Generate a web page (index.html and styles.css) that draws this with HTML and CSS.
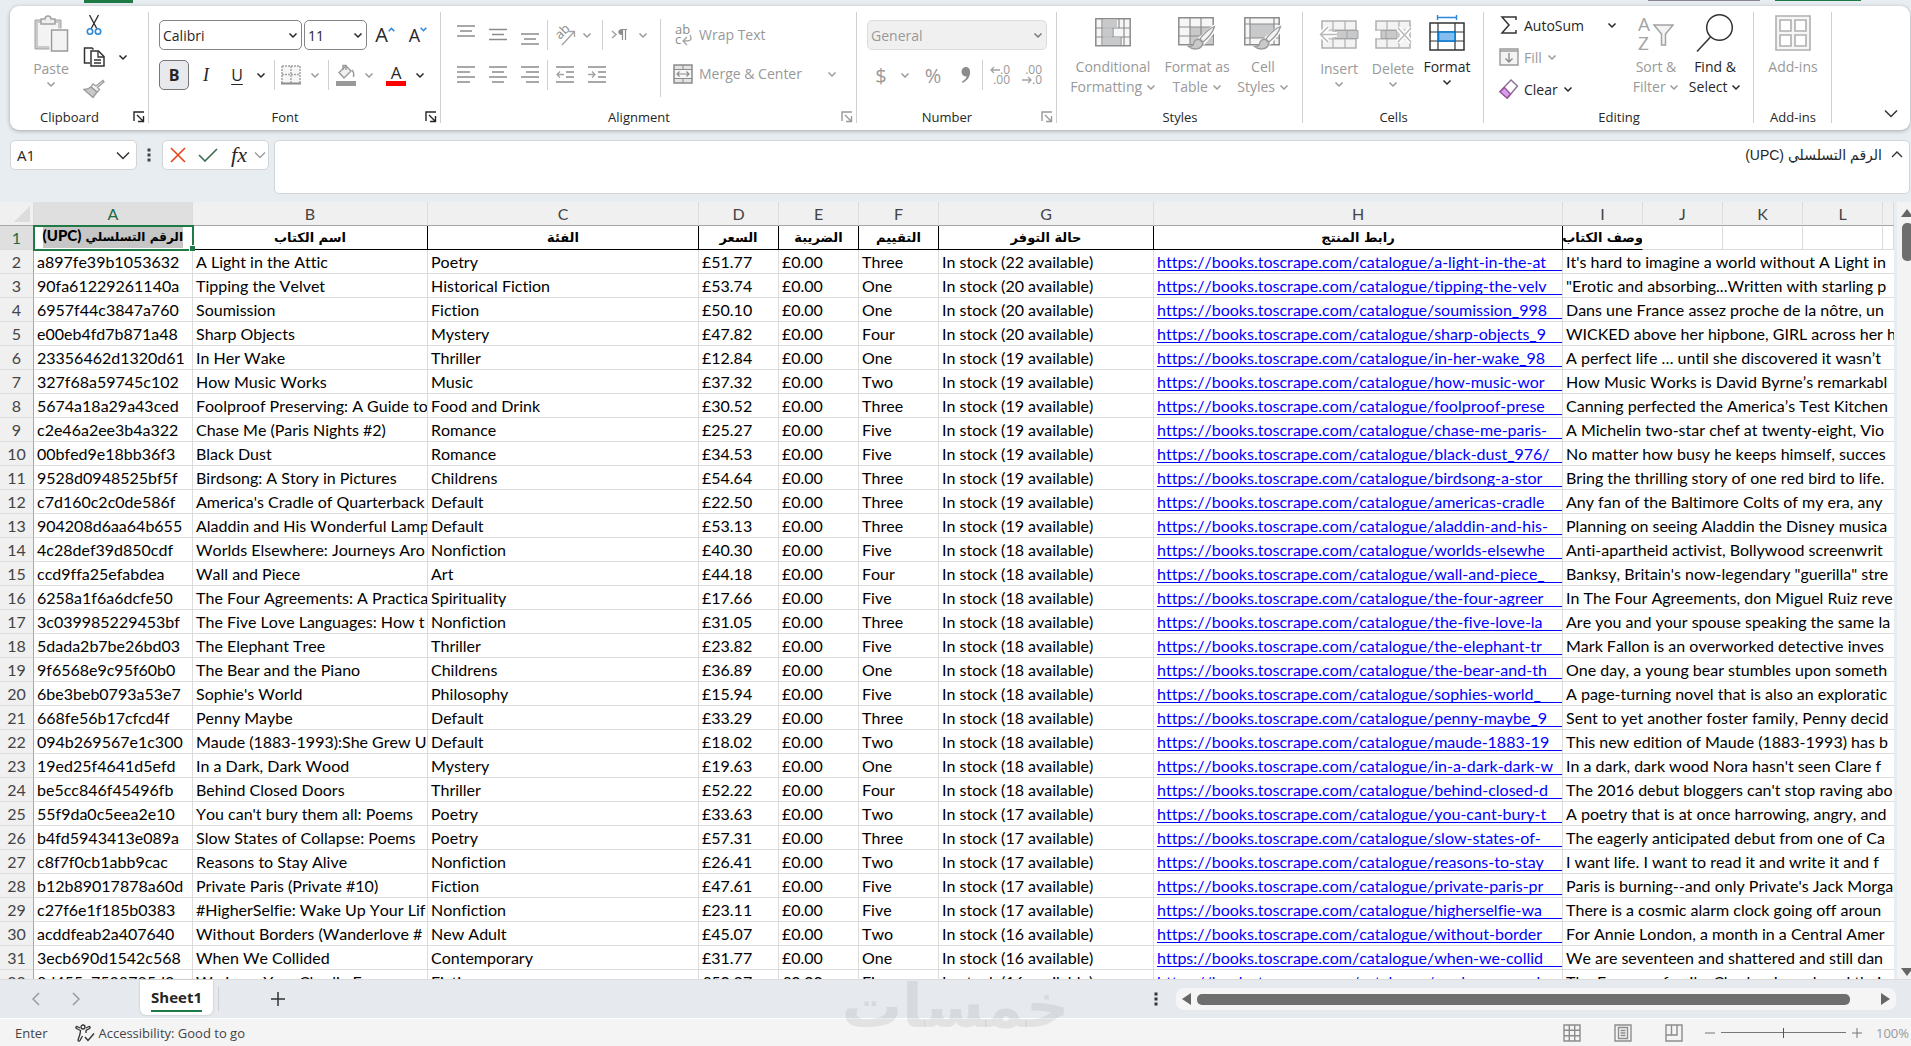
FILE: index.html
```html
<!DOCTYPE html>
<html lang="en">
<head>
  <meta charset="UTF-8">
  <meta name="viewport" content="width=device-width, initial-scale=1.0">
  <title>Books - Sheet1</title>
  <link rel="stylesheet" href="styles.css">
</head>
<body>

  <!-- shared icons -->
  <svg class="defs" aria-hidden="true">
    <symbol id="down" viewBox="0 0 10 10"><path d="M1.5 3.500 5 7l3.500-3.500" fill="none" stroke="currentColor" stroke-width="1.500"/></symbol>
    <symbol id="launch" viewBox="0 0 12 12"><path d="M1 10V1h10M4 4l6 6M10.500 5v5.500H5" fill="none" stroke="currentColor" stroke-width="1.400"/></symbol>
    <symbol id="brush" viewBox="0 0 30 26"><path d="M29 1 15 13l3 4L29 4z" fill="#fff" stroke="#fff" stroke-width="4"/><path d="M28.500 1.500C24 3 17 9 14 14l3 3c5-4 10-10 11.500-15.500z" fill="#f3f3f3" stroke="#9a9a9a" stroke-width="1.300"/><path d="M13.500 14.500c-4-.5-5.500 2-6 4.500-.5 2-3 2.500-5 2.500 4 3.500 13 4 14.500-3.500z" fill="#c8c9ca" stroke="#9a9a9a" stroke-width="1.300"/></symbol>
  </svg>

  <div class="titlebar">
    <span class="tab-mark"></span>
    <span class="comments-edge"></span>
    <span class="share-edge"></span>
  </div>

  <header class="ribbon">
    <section class="group clipboard">
      <div class="group-body">
        <button class="big low" disabled>
          <svg width="36" height="40" viewBox="0 0 36 40"><path d="M2 6h26v29H2z" fill="#c9cacb" stroke="#a3a3a3"/><path d="M5 9h20v23H5z" fill="#f3f3f3"/><path d="M8 10V5h4c0-4 6-4 6 0h4v5z" fill="#eee" stroke="#a3a3a3" stroke-width="1.500"/><path d="M18 16h17v21H18z" fill="#fafafa" stroke="#fff" stroke-width="3"/><path d="M18.500 16h16v21h-16z" fill="#f3f3f3" stroke="#9a9a9a" stroke-width="1.500"/></svg>
          <span>Paste</span>
          <svg class="chev"><use href="#down"/></svg>
        </button>
        <div class="small-tools">
          <button class="cut" aria-label="Cut"><svg width="16" height="22" viewBox="0 0 16 22"><path d="M3.500 1 11 15M12.500 1 5 15" fill="none" stroke="#333" stroke-width="1.400"/><circle cx="4" cy="17.500" r="2.700" fill="#fff" stroke="#2b88d8" stroke-width="1.600"/><circle cx="12" cy="17.500" r="2.700" fill="#fff" stroke="#2b88d8" stroke-width="1.600"/></svg></button>
          <button aria-label="Copy"><svg width="22" height="22" viewBox="0 0 22 22"><path d="M7 17H1.500V2H9l1.500 1.500" fill="none" stroke="#333" stroke-width="1.500"/><path d="M8 5h7.500L21 10.500V20H8z" fill="#fff" stroke="#333" stroke-width="1.500"/><path d="M15 5v6h6M11 14h7M11 17h7" fill="none" stroke="#333" stroke-width="1.300"/></svg></button>
          <button aria-label="Copy options"><svg class="chev"><use href="#down"/></svg></button>
          <button disabled aria-label="Format Painter"><svg width="22" height="20" viewBox="0 0 22 20"><path d="M20 1.500 13 7l-3-2-2 3 6 5 2.500-2.500-2-2L21 3z" fill="#f3f3f3" stroke="#9a9a9a" stroke-width="1.300"/><path d="M8 8c-2 1.500-4 2.500-7 2.500l9 8 4-5.500z" fill="#c8c9ca" stroke="#9a9a9a" stroke-width="1.300"/></svg></button>
        </div>
      </div>
      <footer><span>Clipboard</span><button aria-label="Clipboard options"><svg class="launch"><use href="#launch"/></svg></button></footer>
    </section>

    <section class="group font">
      <div class="group-body rows">
        <div class="row font-top">
          <label class="combo"><select aria-label="Font"><option>Calibri</option></select><svg class="chev"><use href="#down"/></svg></label>
          <i></i>
          <label class="combo"><select aria-label="Font size"><option>11</option></select><svg class="chev"><use href="#down"/></svg></label>
          <button class="grow" aria-label="Increase font size">A<svg width="7" height="5" viewBox="0 0 7 5"><path d="m.7 4.300 2.800-3 2.800 3" fill="none" stroke="#2b88d8" stroke-width="1.600"/></svg></button>
          <button class="grow shrink" aria-label="Decrease font size">A<svg width="7" height="5" viewBox="0 0 7 5"><path d="m.7.7 2.800 3 2.800-3" fill="none" stroke="#2b88d8" stroke-width="1.600"/></svg></button>
        </div>
        <div class="row font-bottom">
          <button class="bold">B</button>
          <button class="italic">I</button>
          <button class="underline">U</button>
          <button aria-label="Underline options"><svg class="chev"><use href="#down"/></svg></button>
          <i class="rule"></i>
          <button disabled aria-label="Borders"><svg width="20" height="20" viewBox="0 0 20 20"><path d="M1 1h18v17H1z" fill="#f6f6f6"/><path d="M1 1h18M1 9.500h18M1 1v17M10 1v17M19 1v17" stroke="#a3a3a3" stroke-width="1.500" stroke-dasharray="2 1" fill="none"/><path d="M0 18.500h20" stroke="#8c8c8c" stroke-width="2"/></svg></button>
          <button disabled aria-label="Borders options"><svg class="chev"><use href="#down"/></svg></button>
          <i class="rule"></i>
          <button disabled aria-label="Fill color"><svg width="20" height="22" viewBox="0 0 20 22"><path d="M3 8.500 10 2l5 5-7 7z" fill="#f0f0f0" stroke="#9a9a9a" stroke-width="1.400"/><path d="M7 6V1.500h3V6M16 6c2 2 2 4 1.500 7" fill="none" stroke="#9a9a9a" stroke-width="1.500"/><path d="M0 17h20v5H0z" fill="#999"/></svg></button>
          <button disabled aria-label="Fill color options"><svg class="chev"><use href="#down"/></svg></button>
          <button class="font-color" aria-label="Font color">A</button>
          <button aria-label="Font color options"><svg class="chev"><use href="#down"/></svg></button>
        </div>
      </div>
      <footer><span>Font</span><button aria-label="Font options"><svg class="launch"><use href="#launch"/></svg></button></footer>
    </section>

    <section class="group alignment">
      <div class="group-body">
        <div class="rows">
          <div class="row align-row">
            <button disabled aria-label="Top align"><svg width="18" height="20" viewBox="0 0 18 20"><path d="M0 1h18M3 6h12M0 11h18" stroke="#8c8c8c" stroke-width="1.500"/></svg></button>
            <button disabled aria-label="Middle align"><svg width="18" height="20" viewBox="0 0 18 20"><path d="M0 4.500h18M3 9.500h12M0 14.500h18" stroke="#8c8c8c" stroke-width="1.500"/></svg></button>
            <button disabled aria-label="Bottom align"><svg width="18" height="20" viewBox="0 0 18 20"><path d="M0 9h18M3 14h12M0 19h18" stroke="#8c8c8c" stroke-width="1.500"/></svg></button>
            <i class="rule"></i>
            <button disabled aria-label="Orientation"><svg width="22" height="22" viewBox="0 0 22 22"><text x="0" y="0" transform="translate(6 16) rotate(-45)" font-size="13" font-family="Open Sans" fill="#8c8c8c">ab</text><path d="M8 21 20 8M15 7.500h5.500V13" fill="none" stroke="#a3a3a3" stroke-width="1.300"/></svg></button>
            <button disabled aria-label="Orientation options"><svg class="chev"><use href="#down"/></svg></button>
            <i class="rule"></i>
            <button disabled aria-label="Text direction"><svg width="16" height="14" viewBox="0 0 16 14"><path d="m1 3 4 3.500L1 10" fill="none" stroke="#a3a3a3" stroke-width="1.500"/><path d="M11 1.500H16M11.500 1v11M14.500 1v11" stroke="#8c8c8c" stroke-width="1.200"/><path d="M11 1c-5 0-5 6 0 6z" fill="#8c8c8c"/></svg></button>
            <button disabled aria-label="Text direction options"><svg class="chev"><use href="#down"/></svg></button>
          </div>
          <div class="row align-row">
            <button disabled aria-label="Align left"><svg width="18" height="18" viewBox="0 0 18 18"><path d="M0 1h18M0 6h13M0 11h18M0 16h13" stroke="#8c8c8c" stroke-width="1.500"/></svg></button>
            <button disabled aria-label="Center"><svg width="18" height="18" viewBox="0 0 18 18"><path d="M0 1h18M3 6h12M0 11h18M3 16h12" stroke="#8c8c8c" stroke-width="1.500"/></svg></button>
            <button disabled aria-label="Align right"><svg width="18" height="18" viewBox="0 0 18 18"><path d="M0 1h18M5 6h13M0 11h18M5 16h13" stroke="#8c8c8c" stroke-width="1.500"/></svg></button>
            <i class="rule"></i>
            <button disabled aria-label="Decrease indent"><svg width="18" height="18" viewBox="0 0 18 18"><path d="M0 1h18M10 6h8M10 11h8M0 16h18" stroke="#8c8c8c" stroke-width="1.500"/><path d="M8 8.500H1M4 5.500l-3 3 3 3" fill="none" stroke="#a3a3a3" stroke-width="1.300"/></svg></button>
            <button class="indent" disabled aria-label="Increase indent"><svg width="18" height="18" viewBox="0 0 18 18"><path d="M0 1h18M10 6h8M10 11h8M0 16h18" stroke="#8c8c8c" stroke-width="1.500"/><path d="M0 8.500h7M4 5.500l3 3-3 3" fill="none" stroke="#a3a3a3" stroke-width="1.300"/></svg></button>
          </div>
        </div>
        <div class="rows wrap-tools">
          <button class="wide" disabled><svg width="20" height="22" viewBox="0 0 20 22"><text x="2" y="10" font-size="13" font-family="Open Sans" fill="#8c8c8c">ab</text><text x="2" y="20" font-size="13" font-family="Open Sans" fill="#8c8c8c">c</text><path d="M17 11c3 6-1 6-6 6M14 13l-4 4 4 4" fill="none" stroke="#a3a3a3" stroke-width="1.300"/></svg>Wrap Text</button>
          <button class="wide" disabled><svg width="20" height="20" viewBox="0 0 20 20"><path d="M1 1h18v18H1z" fill="#e3e3e3" stroke="#8c8c8c" stroke-width="1.500"/><path d="M1 5.500h18M1 14.500h18M10 1v4M10 15v4" stroke="#8c8c8c"/><path d="M2 6h16v8H2z" fill="#f6f6f6"/><path d="M4 10h12M6.500 7.500 4 10l2.500 2.500M13.500 7.500 16 10l-2.500 2.500" fill="none" stroke="#8c8c8c" stroke-width="1.200"/></svg>Merge &amp; Center<svg class="chev last"><use href="#down"/></svg></button>
        </div>
      </div>
      <footer><span>Alignment</span><button disabled aria-label="Alignment options"><svg class="launch"><use href="#launch"/></svg></button></footer>
    </section>

    <section class="group number">
      <div class="group-body rows">
        <label class="combo off"><select disabled aria-label="Number format"><option>General</option></select><svg class="chev"><use href="#down"/></svg></label>
        <div class="row number-row">
          <button disabled class="sign">$</button>
          <button disabled aria-label="Currency options"><svg class="chev"><use href="#down"/></svg></button>
          <button disabled class="sign">%</button>
          <button disabled aria-label="Comma style"><svg width="10" height="16" viewBox="0 0 10 16"><path d="M5 0c6 0 6 12-3.500 16l-.5-1.500c3-1.500 4.500-3.500 4.500-5C-1 10-1 0 5 0z" fill="#8c8c8c"/></svg></button>
          <i class="rule"></i>
          <button disabled class="decimal"><span><svg width="10" height="8" viewBox="0 0 10 8"><path d="M10 4H1M4 1 1 4l3 3" fill="none" stroke="#a3a3a3" stroke-width="1.300"/></svg>.0</span><span>.00</span></button>
          <button disabled class="decimal"><span>.00</span><span><svg width="10" height="8" viewBox="0 0 10 8"><path d="M0 4h9M6 1l3 3-3 3" fill="none" stroke="#a3a3a3" stroke-width="1.300"/></svg>.0</span></button>
        </div>
      </div>
      <footer><span>Number</span><button disabled aria-label="Number options"><svg class="launch"><use href="#launch"/></svg></button></footer>
    </section>

    <section class="group styles">
      <div class="group-body">
        <button class="big" disabled>
          <svg width="36" height="30" viewBox="0 0 36 30"><path d="M.8.800h34.400v27H.8z" fill="#f6f6f6" stroke="#8c8c8c" stroke-width="1.500"/><path d="M1 10h34M1 19h34M7 1v27M29 1v27M24 1v9M18 10v9M26 19v9" stroke="#8c8c8c" stroke-width="1.200"/><path d="M8 2h14v7H8zM8 11h9v7H8zM8 20h17v7H8z" fill="#c8c9ca"/></svg>
          <span>Conditional<br>Formatting <svg class="chev"><use href="#down"/></svg></span>
        </button>
        <button class="big" disabled>
          <svg width="38" height="36" viewBox="0 0 38 36"><path d="M.8 2.800h34.400v27H.8z" fill="#f6f6f6" stroke="#8c8c8c" stroke-width="1.500"/><path d="M12 12h23v17H12z" fill="#c8c9ca"/><path d="M1 12h34M1 21h34M12 3v27M23 3v27" stroke="#8c8c8c" stroke-width="1.200"/><use href="#brush" x="8" y="10" width="30" height="26"/></svg>
          <span>Format as<br>Table <svg class="chev"><use href="#down"/></svg></span>
        </button>
        <button class="big" disabled>
          <svg width="38" height="36" viewBox="0 0 38 36"><path d="M.8 2.800h34.400v27H.8z" fill="#f6f6f6" stroke="#8c8c8c" stroke-width="1.500"/><path d="M6 9h24v14H6z" fill="#c8c9ca"/><path d="M1 9h34M1 23h34M6 3v27M30 3v27" stroke="#8c8c8c" stroke-width="1.200"/><use href="#brush" x="8" y="10" width="30" height="26"/></svg>
          <span>Cell<br>Styles <svg class="chev"><use href="#down"/></svg></span>
        </button>
      </div>
      <footer><span>Styles</span></footer>
    </section>

    <section class="group cells">
      <div class="group-body">
        <button class="big low" disabled>
          <svg width="40" height="34" viewBox="0 0 40 34"><path d="M3 4h34v27H3z" fill="#f3f3f3" stroke="#b0b0b0" stroke-width="1.500"/><path d="M3 13h34M3 22h34M14 4v27M26 4v27" stroke="#b0b0b0" stroke-width="1.200"/><path d="M16 13.500h23v8H16z" fill="#c8c9ca" stroke="#a3a3a3"/><path d="M28 13.500v8" stroke="#a3a3a3"/><path d="M18 17.500H3M9 10l-7.500 7.500L9 25" fill="none" stroke="#fff" stroke-width="5"/><path d="M18 17.500H2M9 10l-7.500 7.500L9 25" fill="none" stroke="#b8b8b8" stroke-width="1.500"/></svg>
          <span>Insert</span>
          <svg class="chev"><use href="#down"/></svg>
        </button>
        <button class="big low" disabled>
          <svg width="38" height="34" viewBox="0 0 38 34"><path d="M2 4h34v27H2z" fill="#f3f3f3" stroke="#b0b0b0" stroke-width="1.500"/><path d="M2 13h34M2 22h34M13 4v27M25 4v27" stroke="#b0b0b0" stroke-width="1.200"/><path d="M0 14h8v7H0z" fill="#fff"/><path d="M7 13.500h16v8H7z" fill="#c8c9ca" stroke="#a3a3a3"/><path d="M12 13.500v8" stroke="#a3a3a3"/><path d="m24 11 13 14M37 11 24 25" stroke="#fff" stroke-width="5"/><path d="m24 11 13 14M37 11 24 25" stroke="#b8b8b8" stroke-width="1.500"/></svg>
          <span>Delete</span>
          <svg class="chev"><use href="#down"/></svg>
        </button>
        <button class="big">
          <svg width="36" height="36" viewBox="0 0 36 36"><path d="M8.500 0v5M27.500 0v5M8.500 2.500h19" stroke="#2b88d8" stroke-width="1.400"/><path d="M1 8h34v27H1z" fill="#fff" stroke="#333" stroke-width="1.500"/><path d="M1 17h34M1 26h34M9 8v27M26 8v27" stroke="#333" stroke-width="1.200"/><path d="M9.500 17h16.500v9H9.500z" fill="#83beec" stroke="#0078d4" stroke-width="1.500"/></svg>
          <span>Format</span>
          <svg class="chev"><use href="#down"/></svg>
        </button>
      </div>
      <footer><span>Cells</span></footer>
    </section>

    <section class="group editing">
      <div class="group-body">
        <div class="edit-tools">
          <button class="wide"><svg width="20" height="20" viewBox="0 0 20 20"><path d="M17 5V2H3l7 8-7 8h14v-3" fill="none" stroke="#333" stroke-width="1.500"/></svg>AutoSum<svg class="chev last"><use href="#down"/></svg></button>
          <button class="wide" disabled><svg width="20" height="20" viewBox="0 0 20 20"><path d="M1 2h18v16H1z" fill="#f3f3f3" stroke="#9a9a9a" stroke-width="1.400"/><path d="M1 4h18" stroke="#9a9a9a" stroke-width="1.500"/><path d="M10 6v9M6.500 11.500 10 15l3.500-3.500" fill="none" stroke="#8c8c8c" stroke-width="1.400"/></svg>Fill <svg class="chev"><use href="#down"/></svg></button>
          <button class="wide"><svg width="20" height="20" viewBox="0 0 20 20"><path d="m12 1 6.500 6L8.500 19 1 12.500z" fill="#fff" stroke="#8a6d96" stroke-width="1.400"/><path d="m5.500 8.500 6 6.500-3.500 4-7-6z" fill="#d59df0" stroke="#9b4f96" stroke-width="1.300"/></svg>Clear <svg class="chev"><use href="#down"/></svg></button>
        </div>
        <button class="big" disabled>
          <svg width="36" height="38" viewBox="0 0 36 38"><text x="0" y="17" font-size="19" font-family="Open Sans" fill="#a3a3a3">A</text><text x="0" y="36" font-size="19" font-family="Open Sans" fill="#a3a3a3">Z</text><path d="M16 11h19l-7.500 9v11h-4V20z" fill="#f3f3f3" stroke="#a3a3a3" stroke-width="1.500"/></svg>
          <span>Sort &amp;<br>Filter <svg class="chev"><use href="#down"/></svg></span>
        </button>
        <button class="big">
          <svg width="38" height="40" viewBox="0 0 38 40"><circle cx="23.500" cy="14.500" r="12.800" fill="#fff" stroke="#333" stroke-width="1.500"/><path d="M14.500 24 1 38.500" stroke="#333" stroke-width="1.500"/></svg>
          <span>Find &amp;<br>Select <svg class="chev"><use href="#down"/></svg></span>
        </button>
      </div>
      <footer><span>Editing</span></footer>
    </section>

    <section class="group addins">
      <div class="group-body">
        <button class="big" disabled>
          <svg width="36" height="36" viewBox="0 0 36 36"><path d="M1 1h34v34H1z" fill="#f6f6f6" stroke="#b0b0b0" stroke-width="1.600"/><path d="M5 5h11v11H5zM20 5h11v11H20zM5 20h11v11H5zM20 20h11v11H20z" fill="#fff" stroke="#b0b0b0" stroke-width="1.600"/></svg>
          <span>Add-ins</span>
        </button>
      </div>
      <footer><span>Add-ins</span></footer>
    </section>

    <button class="collapse" aria-label="Collapse ribbon"><svg width="14" height="9" viewBox="0 0 14 9"><path d="m1 1.500 6 6 6-6" fill="none" stroke="#333" stroke-width="1.500"/></svg></button>
  </header>

  <div class="formula-bar">
    <label class="name-box"><input type="text" value="A1" aria-label="Name box"><svg width="14" height="9" viewBox="0 0 14 9"><path d="m1 1.500 6 6 6-6" fill="none" stroke="#333" stroke-width="1.500"/></svg></label>
    <svg class="dots" width="4" height="14" viewBox="0 0 4 14"><path d="M.5.500h3v3h-3zM.5 5.500h3v3h-3zM.5 10.500h3v3h-3z" fill="#444"/></svg>
    <div class="fx">
      <button aria-label="Cancel"><svg width="16" height="16" viewBox="0 0 16 16"><path d="m1 1 14 14M15 1 1 15" stroke="#e8431a" stroke-width="1.600"/></svg></button>
      <button aria-label="Enter"><svg width="20" height="14" viewBox="0 0 20 14"><path d="m1 7 6 6L19 1" fill="none" stroke="#3d6b51" stroke-width="1.600"/></svg></button>
      <button class="fx-label">fx</button>
      <button aria-label="Function list"><svg width="12" height="9" viewBox="0 0 12 9"><path d="m1 1.500 5 5 5-5" fill="none" stroke="#9a9a9a" stroke-width="1.300"/></svg></button>
    </div>
    <div class="formula">
      <textarea dir="rtl" aria-label="Formula bar">الرقم التسلسلي (UPC)</textarea>
      <button aria-label="Collapse formula bar"><svg width="12" height="8" viewBox="0 0 12 8"><path d="m1 7 5-5 5 5" fill="none" stroke="#333" stroke-width="1.400"/></svg></button>
    </div>
  </div>

  <main class="sheet">
    <div class="grid">
      <table>
        <colgroup>
          <col class="c-num"><col class="c-a"><col class="c-b"><col class="c-c"><col class="c-s"><col class="c-s"><col class="c-s"><col class="c-g"><col class="c-h"><col class="c-s"><col class="c-s"><col class="c-s"><col class="c-s"><col>
        </colgroup>
        <thead>
          <tr>
            <th class="corner"><svg width="16" height="16" viewBox="0 0 16 16"><path d="M16 0v16H0z" fill="#dcdcdc"/></svg></th>
            <th class="active">A</th><th>B</th><th>C</th><th>D</th><th>E</th><th>F</th><th>G</th><th>H</th><th>I</th><th>J</th><th>K</th><th>L</th><th></th>
          </tr>
        </thead>
        <tbody id="rows">
          <tr class="titles">
            <th class="active">1</th>
            <td class="selected" dir="rtl"><mark>الرقم التسلسلي <b>(UPC)</b></mark><i class="handle"></i></td>
            <td dir="rtl">اسم الكتاب</td>
            <td dir="rtl">الفئة</td>
            <td dir="rtl">السعر</td>
            <td dir="rtl">الضريبة</td>
            <td dir="rtl">التقييم</td>
            <td dir="rtl">حالة التوفر</td>
            <td dir="rtl">رابط المنتج</td>
            <td dir="rtl" class="last-title">وصف الكتاب</td>
            <td class="blank"></td><td class="blank"></td><td class="blank"></td><td class="blank"></td>
          </tr>
        </tbody>
      </table>
    </div>
    <div class="vscroll">
      <svg width="12" height="8" viewBox="0 0 12 8"><path d="M6 0l6 8H0z" fill="#666"/></svg>
      <span class="vthumb"></span>
      <svg width="12" height="8" viewBox="0 0 12 8"><path d="M6 8 0 0h12z" fill="#666"/></svg>
    </div>
  </main>

  <nav class="tabs">
    <button class="nav" aria-label="Previous sheet"><svg width="8" height="14" viewBox="0 0 8 14"><path d="M7 1 1 7l6 6" fill="none" stroke="#9a9a9a" stroke-width="1.500"/></svg></button>
    <button class="nav" aria-label="Next sheet"><svg width="8" height="14" viewBox="0 0 8 14"><path d="m1 1 6 6-6 6" fill="none" stroke="#9a9a9a" stroke-width="1.500"/></svg></button>
    <button class="tab"><span>Sheet1</span></button>
    <i class="rule"></i>
    <button class="add" aria-label="New sheet"><svg width="16" height="16" viewBox="0 0 16 16"><path d="M8 1v14M1 8h14" stroke="#333" stroke-width="1.500"/></svg></button>
    <svg class="dots" width="4" height="14" viewBox="0 0 4 14"><path d="M.5.500h3v3h-3zM.5 5.500h3v3h-3zM.5 10.500h3v3h-3z" fill="#333"/></svg>
    <div class="hscroll">
      <svg width="9" height="12" viewBox="0 0 9 12"><path d="M0 6l9-6v12z" fill="#666"/></svg>
      <span class="hthumb"></span>
      <svg width="9" height="12" viewBox="0 0 9 12"><path d="M9 6 0 0v12z" fill="#666"/></svg>
    </div>
    <span class="watermark" dir="rtl">خمسات</span>
  </nav>

  <footer class="status">
    <span>Enter</span>
    <button class="access"><svg width="20" height="18" viewBox="0 0 20 18"><circle cx="8" cy="3" r="2" fill="none" stroke="#333" stroke-width="1.300"/><path d="M5 4 2 2.500C1 2 .5 4 1.500 4.500L5.500 6.500 5 10l-2 6c0 1.500 1.500 1.500 2 .5L7.500 12M11 4l3-1.500c1-.5 1.500 1.500.5 2L11 6.500V9" fill="none" stroke="#333" stroke-width="1.300"/><path d="m10 13 3 3.500 6-7" fill="none" stroke="#333" stroke-width="1.400"/></svg>Accessibility: Good to go</button>
    <div class="views">
      <button aria-label="Normal"><svg width="18" height="18" viewBox="0 0 18 18"><path d="M1 1h16v16H1zM1 6.300h16M1 11.700h16M6.300 1v16M11.700 1v16" fill="none" stroke="#8c8c8c" stroke-width="1.400"/></svg></button>
      <button aria-label="Page layout"><svg width="18" height="18" viewBox="0 0 18 18"><path d="M1 1h16v16H1zM4.500 3.500h9v11h-9zM6.500 6.500h5M6.500 9h5M6.500 11.500h5" fill="none" stroke="#8c8c8c" stroke-width="1.400"/></svg></button>
      <button aria-label="Page break"><svg width="18" height="18" viewBox="0 0 18 18"><path d="M1 17V1h16v16zM1 11h11V1M6.500 1v10" fill="none" stroke="#8c8c8c" stroke-width="1.400"/></svg></button>
    </div>
    <div class="zoom">
      <button aria-label="Zoom out"><svg width="10" height="10" viewBox="0 0 10 10"><path d="M0 5h10" stroke="#777"/></svg></button>
      <input type="range" aria-label="Zoom" min="10" max="190" value="100">
      <button aria-label="Zoom in"><svg width="10" height="10" viewBox="0 0 10 10"><path d="M0 5h10M5 0v10" stroke="#777"/></svg></button>
      <span>100%</span>
    </div>
  </footer>

  <script src="script.js"></script>
</body>
</html>
```
FILE: styles.css
```css
* {
  box-sizing: border-box;
}

body {
  margin: 0;
  height: 100vh;
  display: flex;
  flex-direction: column;
  overflow: hidden;
  background-color: #e8edf2;
  color: #262626;
  font-family: "Open Sans", "DejaVu Sans", sans-serif;
  font-size: 14px;
}

button {
  display: flex;
  align-items: center;
  justify-content: center;
  padding: 0;
  background: none;
  border: none;
  color: #262626;
  font-family: inherit;
  font-size: 14px;
}

button:disabled {
  color: #999;
}

svg {
  flex: none;
}

.defs {
  position: absolute;
  width: 0;
  height: 0;
}

.chev {
  width: 10px;
  height: 10px;
}

.launch {
  width: 12px;
  height: 12px;
}

.rule {
  width: 1px;
  height: 30px;
  background-color: #d0d0d0;
}

/* top edge */
.titlebar {
  display: flex;
  height: 6px;
  padding: 0 50px 0 84px;
}

.tab-mark {
  width: 49px;
  height: 3px;
  background-color: #1e7b45;
}

.comments-edge {
  width: 112px;
  height: 1px;
  margin: 0 15px 0 auto;
  background-color: #8d8593;
}

.share-edge {
  width: 86px;
  height: 1px;
  background-color: #1e7b45;
}

/* ribbon */
.ribbon {
  display: flex;
  height: 124px;
  margin: 0 1px 0 10px;
  background-color: #fff;
  border-radius: 9px;
  box-shadow: 0 1px 4px rgba(0, 0, 0, 0.3);
}

.group {
  position: relative;
  display: flex;
  flex-direction: column;
  justify-content: space-between;
  padding: 3px 0 4px;
}

.group::after {
  content: "";
  position: absolute;
  top: 6px;
  right: 0;
  bottom: 7px;
  width: 1px;
  background-color: #d0d0d0;
}

.group-body {
  display: flex;
  height: 96px;
}

.group footer {
  display: flex;
  align-items: center;
  height: 18px;
  font-size: 13px;
}

.group footer span {
  flex: 1;
  text-align: center;
}

.group footer button {
  width: 20px;
}

.clipboard { width: 139px; }
.font { width: 292px; }
.alignment { width: 416px; }
.number { width: 200px; }
.styles { width: 246px; }
.cells { width: 181px; }
.editing { width: 270px; }
.addins { width: 78px; }

.big {
  display: grid;
  grid-template-rows: 48px auto auto;
  align-content: start;
  place-items: center;
  line-height: 20px;
}

.big.low {
  grid-template-rows: 50px auto auto;
}

.clipboard .group-body {
  padding-left: 20px;
}

.clipboard .big {
  width: 42px;
}

.small-tools {
  display: grid;
  grid-template-columns: 44px 14px;
  grid-template-rows: 32px 32px 32px;
}

.small-tools .cut {
  grid-column: 1 / 3;
  width: 44px;
}

.rows {
  display: flex;
  flex-direction: column;
  padding-top: 6px;
}

.row {
  display: grid;
  height: 40px;
  align-items: center;
  justify-items: center;
}

.font .rows,
.number .rows {
  padding-left: 10px;
}

.font-top {
  grid-template-columns: 143px 2px 63px 36px 30px;
}

.font-bottom {
  grid-template-columns: 30px 34px 28px 20px 6px 28px 20px 6px 30px 16px 38px 10px;
}

.combo {
  display: flex;
  align-items: center;
  width: 100%;
  height: 30px;
  padding: 0 3px;
  background-color: #fff;
  border: 1px solid #858585;
  border-radius: 5px;
}

.combo select {
  flex: 1;
  min-width: 0;
  padding: 0;
  appearance: none;
  background: none;
  border: none;
  color: #262626;
  font-family: inherit;
  font-size: 14px;
}

.combo.off {
  width: 180px;
  margin: 5px 0;
  background-color: #f0f0f0;
  border-color: #dcdcdc;
  color: #777;
}

.combo.off select {
  color: #999;
  opacity: 1;
}

.grow {
  align-items: flex-start;
  font-size: 20px;
  line-height: 26px;
}

.grow svg {
  margin-top: 5px;
}

.shrink {
  font-size: 18px;
}

.bold {
  width: 30px;
  height: 30px;
  background-color: #e8e9ec;
  border: 1px solid #767676;
  border-radius: 5px;
  font-size: 16px;
  font-weight: 700;
}

.italic {
  font-family: "Liberation Serif", serif;
  font-size: 18px;
  font-style: italic;
}

.underline {
  font-size: 16px;
  text-decoration: underline;
  text-underline-offset: 3px;
}

.font-color {
  width: 20px;
  height: 22px;
  border-bottom: 5px solid #f00;
  font-size: 17px;
  line-height: 16px;
}

.alignment .rows {
  padding-left: 9px;
}

.align-row {
  grid-template-columns: 32px 32px 32px 2px 34px 10px 20px 14px 34px;
}

.align-row .indent {
  grid-column: 6 / 8;
}

.alignment .wrap-tools {
  flex: 1;
  height: 78px;
  margin-top: 10px;
  margin-right: 20px;
  padding: 0 0 0 12px;
  border-left: 1px solid #d0d0d0;
}

.wide {
  height: 32px;
  justify-content: flex-start;
  gap: 5px;
  white-space: nowrap;
}

.wrap-tools .wide {
  gap: 6px;
  height: 40px;
  margin-top: -4px;
  margin-bottom: 4px;
}

.wide .last {
  margin-left: auto;
}

.number-row {
  grid-template-columns: 28px 20px 36px 30px 2px 34px 30px;
}

.sign {
  font-size: 20px;
}

.decimal {
  flex-direction: column;
  align-items: flex-end;
  font-size: 12px;
  line-height: 10px;
}

.styles .group-body {
  display: grid;
  grid-template-columns: 94px 74px 58px;
  padding-left: 9px;
}

.cells .group-body {
  display: grid;
  grid-template-columns: 54px 54px 54px;
  padding-left: 9px;
}

.editing .group-body {
  display: grid;
  grid-template-columns: 128px 58px 60px;
  padding-left: 15px;
}

.edit-tools {
  padding-right: 10px;
}

.edit-tools .wide {
  width: 100%;
}

.addins .group-body {
  justify-content: center;
}

.collapse {
  align-self: flex-end;
  width: 30px;
  height: 34px;
  margin: 0 4px 0 auto;
}

/* formula bar */
.formula-bar {
  display: flex;
  align-items: flex-start;
  height: 72px;
  padding: 10px 1px 0 10px;
}

.name-box {
  display: flex;
  align-items: center;
  width: 127px;
  height: 30px;
  padding: 0 6px;
  background-color: #fff;
  border: 1px solid #d2d4d6;
  border-radius: 5px;
}

.name-box input {
  flex: 1;
  min-width: 0;
  padding: 0;
  border: none;
  color: #262626;
  font-family: inherit;
  font-size: 15px;
}

.formula-bar .dots {
  margin: 8px 11px 0 10px;
}

.fx {
  display: grid;
  grid-template-columns: 30px 30px 32px 10px;
  width: 107px;
  height: 30px;
  background-color: #fff;
  border: 1px solid #d2d4d6;
  border-radius: 5px;
}

.fx-label {
  font-family: "Liberation Serif", serif;
  font-size: 22px;
  font-style: italic;
}

.formula {
  flex: 1;
  display: flex;
  align-items: flex-start;
  height: 54px;
  margin-left: 5px;
  background-color: #fff;
  border: 1px solid #d2d4d6;
  border-radius: 5px;
}

.formula textarea {
  flex: 1;
  height: 50px;
  padding: 4px 3px;
  background: none;
  border: none;
  outline: none;
  resize: none;
  color: #262626;
  font-family: "Liberation Sans", "DejaVu Sans", sans-serif;
  font-size: 14px;
  line-height: 20px;
}

.formula button {
  width: 24px;
  height: 26px;
}

/* sheet */
.sheet {
  flex: 1;
  display: flex;
  min-height: 0;
}

.grid {
  flex: 1;
  overflow: hidden;
  background-color: #fff;
}

table {
  width: 100%;
  table-layout: fixed;
  border-collapse: separate;
  border-spacing: 0;
  font-family: "Lato", "DejaVu Sans", sans-serif;
  font-size: 16px;
  font-kerning: none;
  font-variant-ligatures: none;
}

.c-num { width: 34px; }
.c-a { width: 159px; }
.c-b { width: 235px; }
.c-c { width: 271px; }
.c-s { width: 80px; }
.c-g { width: 215px; }
.c-h { width: 409px; }

th {
  height: 24px;
  padding: 0;
  background-color: #f0f0f0;
  border-right: 1px solid #dcdcdc;
  border-bottom: 1px solid #a6a6a6;
  color: #444;
  font-weight: 400;
  line-height: 23px;
}

tbody th {
  border-right-color: #a6a6a6;
  border-bottom-color: #dcdcdc;
}

th.active {
  background-color: #dfdfdf;
  color: #1e6b41;
}

.corner {
  padding-right: 3px;
}

.corner svg {
  display: block;
  margin-left: auto;
}

td {
  height: 24px;
  padding: 0 0 0 3px;
  overflow: hidden;
  border-right: 1px solid #dcdcdc;
  border-bottom: 1px solid #dcdcdc;
  color: #000;
  line-height: 23px;
  white-space: nowrap;
}

.note {
  border-right: none;
}

td a {
  display: block;
  height: 21px;
  margin-bottom: 2px;
  border-bottom: 1px solid #00f;
  color: #00f;
  text-decoration: none;
}

.titles td {
  padding: 0;
  border-right-color: #000;
  border-bottom-color: #000;
  font-family: "DejaVu Sans", sans-serif;
  font-size: 13px;
  font-weight: 700;
  text-align: center;
}

.titles .last-title {
  border-right-color: #fff;
}

.titles .blank {
  border-color: #dcdcdc;
}

.titles .selected {
  position: relative;
  overflow: visible;
  padding-right: 10px;
  outline: 2px solid #1e7b45;
  outline-offset: -1px;
  text-align: right;
  font-size: 12px;
}

.selected mark {
  display: block;
  width: max-content;
  height: 21px;
  background-color: #c6c6c6;
  color: #000;
  line-height: 21px;
}

.selected b {
  font-family: "Lato", sans-serif;
  font-size: 15px;
  line-height: 16px;
}

.handle {
  position: absolute;
  right: -2px;
  bottom: -2px;
  width: 6px;
  height: 6px;
  background-color: #1e7b45;
  border-top: 1px solid #fff;
  border-left: 1px solid #fff;
}

.vscroll {
  display: flex;
  flex-direction: column;
  align-items: center;
  width: 17px;
  padding: 7px 0 3px 6px;
  overflow: hidden;
  background-color: #f3f3f3;
  border-left: 3px solid #e8edf2;
}

.vthumb {
  width: 11px;
  height: 38px;
  margin: 6px 0 auto;
  background-color: #6e6e6e;
  border-radius: 5px;
}

/* sheet tabs */
.tabs {
  position: relative;
  display: flex;
  align-items: center;
  height: 40px;
  padding: 0 15px 0 16px;
  background-color: #e6eaef;
  border-top: 1px solid #dcdcdc;
  border-bottom: 1px solid #fff;
}

.nav {
  width: 40px;
  height: 30px;
}

.tab {
  align-self: flex-start;
  width: 73px;
  height: 35px;
  margin: 0 5px 0 44px;
  background-color: #fff;
  border-radius: 0 0 6px 6px;
  box-shadow: 0 0 2px rgba(0, 0, 0, 0.25);
  font-size: 15px;
  font-weight: 700;
}

.tab span {
  border-bottom: 2px solid #1e7b45;
  line-height: 26px;
}

.tabs .rule {
  height: 24px;
}

.add {
  width: 30px;
  height: 30px;
  margin-left: 44px;
}

.tabs .dots {
  margin-left: auto;
}

.hscroll {
  display: flex;
  align-items: center;
  width: 720px;
  height: 22px;
  margin-left: 18px;
  padding: 0 6px;
  background-color: #f5f5f5;
  border-radius: 8px;
}

.hthumb {
  width: 653px;
  height: 11px;
  margin: 0 auto 0 6px;
  background-color: #6e6e6e;
  border-radius: 5px;
}

.watermark {
  position: absolute;
  left: 0;
  right: 0;
  top: -6px;
  color: rgba(120, 120, 120, 0.14);
  font-family: "DejaVu Sans", sans-serif;
  font-size: 60px;
  font-weight: 700;
  line-height: 64px;
  text-align: center;
  pointer-events: none;
}

/* status bar */
.status {
  display: flex;
  align-items: center;
  height: 27px;
  padding-left: 15px;
  background-color: #f4f4f4;
  color: #444;
  font-size: 13px;
}

.access {
  gap: 3px;
  margin-left: 28px;
  color: #444;
  font-size: 13px;
}

.views {
  display: flex;
  gap: 33px;
  margin-left: auto;
}

.zoom {
  display: flex;
  align-items: center;
  gap: 6px;
  margin-left: 22px;
  color: #999;
}

.zoom span {
  width: 43px;
  padding-left: 8px;
}

.zoom input {
  width: 125px;
  height: 12px;
  margin: 0;
  appearance: none;
  background: linear-gradient(#777, #777) center / 100% 1px no-repeat;
}

.zoom input::-webkit-slider-thumb {
  appearance: none;
  width: 1px;
  height: 10px;
  background-color: #555;
}
```
FILE: script.js
```js
const base = 'https://books.toscrape.com/catalogue/';

// upc, title, category, price, rating, stock, link, description
const books = [
  ['a897fe39b1053632', 'A Light in the Attic', 'Poetry', '51.77', 'Three', 22, 'a-light-in-the-at', "It's hard to imagine a world without A Light in"],
  ['90fa61229261140a', 'Tipping the Velvet', 'Historical Fiction', '53.74', 'One', 20, 'tipping-the-velv', '"Erotic and absorbing...Written with starling p'],
  ['6957f44c3847a760', 'Soumission', 'Fiction', '50.10', 'One', 20, 'soumission_998', 'Dans une France assez proche de la nôtre, un'],
  ['e00eb4fd7b871a48', 'Sharp Objects', 'Mystery', '47.82', 'Four', 20, 'sharp-objects_9', 'WICKED above her hipbone, GIRL across her h'],
  ['23356462d1320d61', 'In Her Wake', 'Thriller', '12.84', 'One', 19, 'in-her-wake_98', 'A perfect life … until she discovered it wasn’t'],
  ['327f68a59745c102', 'How Music Works', 'Music', '37.32', 'Two', 19, 'how-music-wor', 'How Music Works is David Byrne’s remarkabl'],
  ['5674a18a29a43ced', 'Foolproof Preserving: A Guide to', 'Food and Drink', '30.52', 'Three', 19, 'foolproof-prese', 'Canning perfected the America’s Test Kitchen'],
  ['c2e46a2ee3b4a322', 'Chase Me (Paris Nights #2)', 'Romance', '25.27', 'Five', 19, 'chase-me-paris-', 'A Michelin two-star chef at twenty-eight, Vio'],
  ['00bfed9e18bb36f3', 'Black Dust', 'Romance', '34.53', 'Five', 19, 'black-dust_976/', 'No matter how busy he keeps himself, succes'],
  ['9528d0948525bf5f', 'Birdsong: A Story in Pictures', 'Childrens', '54.64', 'Three', 19, 'birdsong-a-stor', 'Bring the thrilling story of one red bird to life.'],
  ['c7d160c2c0de586f', "America's Cradle of Quarterback", 'Default', '22.50', 'Three', 19, 'americas-cradle', 'Any fan of the Baltimore Colts of my era, any'],
  ['904208d6aa64b655', 'Aladdin and His Wonderful Lamp', 'Default', '53.13', 'Three', 19, 'aladdin-and-his-', 'Planning on seeing Aladdin the Disney musica'],
  ['4c28def39d850cdf', 'Worlds Elsewhere: Journeys Aro', 'Nonfiction', '40.30', 'Five', 18, 'worlds-elsewhe', 'Anti-apartheid activist, Bollywood screenwrit'],
  ['ccd9ffa25efabdea', 'Wall and Piece', 'Art', '44.18', 'Four', 18, 'wall-and-piece_', 'Banksy, Britain\'s now-legendary "guerilla" stre'],
  ['6258a1f6a6dcfe50', 'The Four Agreements: A Practica', 'Spirituality', '17.66', 'Five', 18, 'the-four-agreer', 'In The Four Agreements, don Miguel Ruiz reve'],
  ['3c039985229453bf', 'The Five Love Languages: How t', 'Nonfiction', '31.05', 'Three', 18, 'the-five-love-la', 'Are you and your spouse speaking the same la'],
  ['5dada2b7be26bd03', 'The Elephant Tree', 'Thriller', '23.82', 'Five', 18, 'the-elephant-tr', 'Mark Fallon is an overworked detective inves'],
  ['9f6568e9c95f60b0', 'The Bear and the Piano', 'Childrens', '36.89', 'One', 18, 'the-bear-and-th', 'One day, a young bear stumbles upon someth'],
  ['6be3beb0793a53e7', "Sophie's World", 'Philosophy', '15.94', 'Five', 18, 'sophies-world_', 'A page-turning novel that is also an exploratic'],
  ['668fe56b17cfcd4f', 'Penny Maybe', 'Default', '33.29', 'Three', 18, 'penny-maybe_9', 'Sent to yet another foster family, Penny decid'],
  ['094b269567e1c300', 'Maude (1883-1993):She Grew U', 'Default', '18.02', 'Two', 18, 'maude-1883-19', 'This new edition of Maude (1883-1993) has b'],
  ['19ed25f4641d5efd', 'In a Dark, Dark Wood', 'Mystery', '19.63', 'One', 18, 'in-a-dark-dark-w', "In a dark, dark wood Nora hasn't seen Clare f"],
  ['be5cc846f45496fb', 'Behind Closed Doors', 'Thriller', '52.22', 'Four', 18, 'behind-closed-d', "The 2016 debut bloggers can't stop raving abo"],
  ['55f9da0c5eea2e10', "You can't bury them all: Poems", 'Poetry', '33.63', 'Two', 17, 'you-cant-bury-t', 'A poetry that is at once harrowing, angry, and'],
  ['b4fd5943413e089a', 'Slow States of Collapse: Poems', 'Poetry', '57.31', 'Three', 17, 'slow-states-of-', 'The eagerly anticipated debut from one of Ca'],
  ['c8f7f0cb1abb9cac', 'Reasons to Stay Alive', 'Nonfiction', '26.41', 'Two', 17, 'reasons-to-stay', 'I want life. I want to read it and write it and f'],
  ['b12b89017878a60d', 'Private Paris (Private #10)', 'Fiction', '47.61', 'Five', 17, 'private-paris-pr', "Paris is burning--and only Private's Jack Morga"],
  ['c27f6e1f185b0383', '#HigherSelfie: Wake Up Your Lif', 'Nonfiction', '23.11', 'Five', 17, 'higherselfie-wa', 'There is a cosmic alarm clock going off aroun'],
  ['acddfeab2a407640', 'Without Borders (Wanderlove #', 'New Adult', '45.07', 'Two', 16, 'without-border', 'For Annie London, a month in a Central Amer'],
  ['3ecb690d1542c568', 'When We Collided', 'Contemporary', '31.77', 'One', 16, 'when-we-collid', 'We are seventeen and shattered and still dan'],
  ['8d455a7538785d2c', 'We Love You, Charlie Freeman', 'Fiction', '50.27', 'Five', 16, 'we-love-you-ch', 'The Freeman family, Charles, Laurel, and thei']
];

const rows = document.getElementById('rows');

books.forEach((book, index) => {
  const [upc, title, category, price, rating, stock, link, note] = book;
  const tr = document.createElement('tr');
  tr.innerHTML = `
    <th>${index + 2}</th>
    <td>${upc}</td>
    <td>${title}</td>
    <td>${category}</td>
    <td>£${price}</td>
    <td>£0.00</td>
    <td>${rating}</td>
    <td>In stock (${stock} available)</td>
    <td><a href="${base}${link}">${base}${link}</a></td>
    <td class="note" colspan="5">${note}</td>
  `;
  rows.appendChild(tr);
});
```
